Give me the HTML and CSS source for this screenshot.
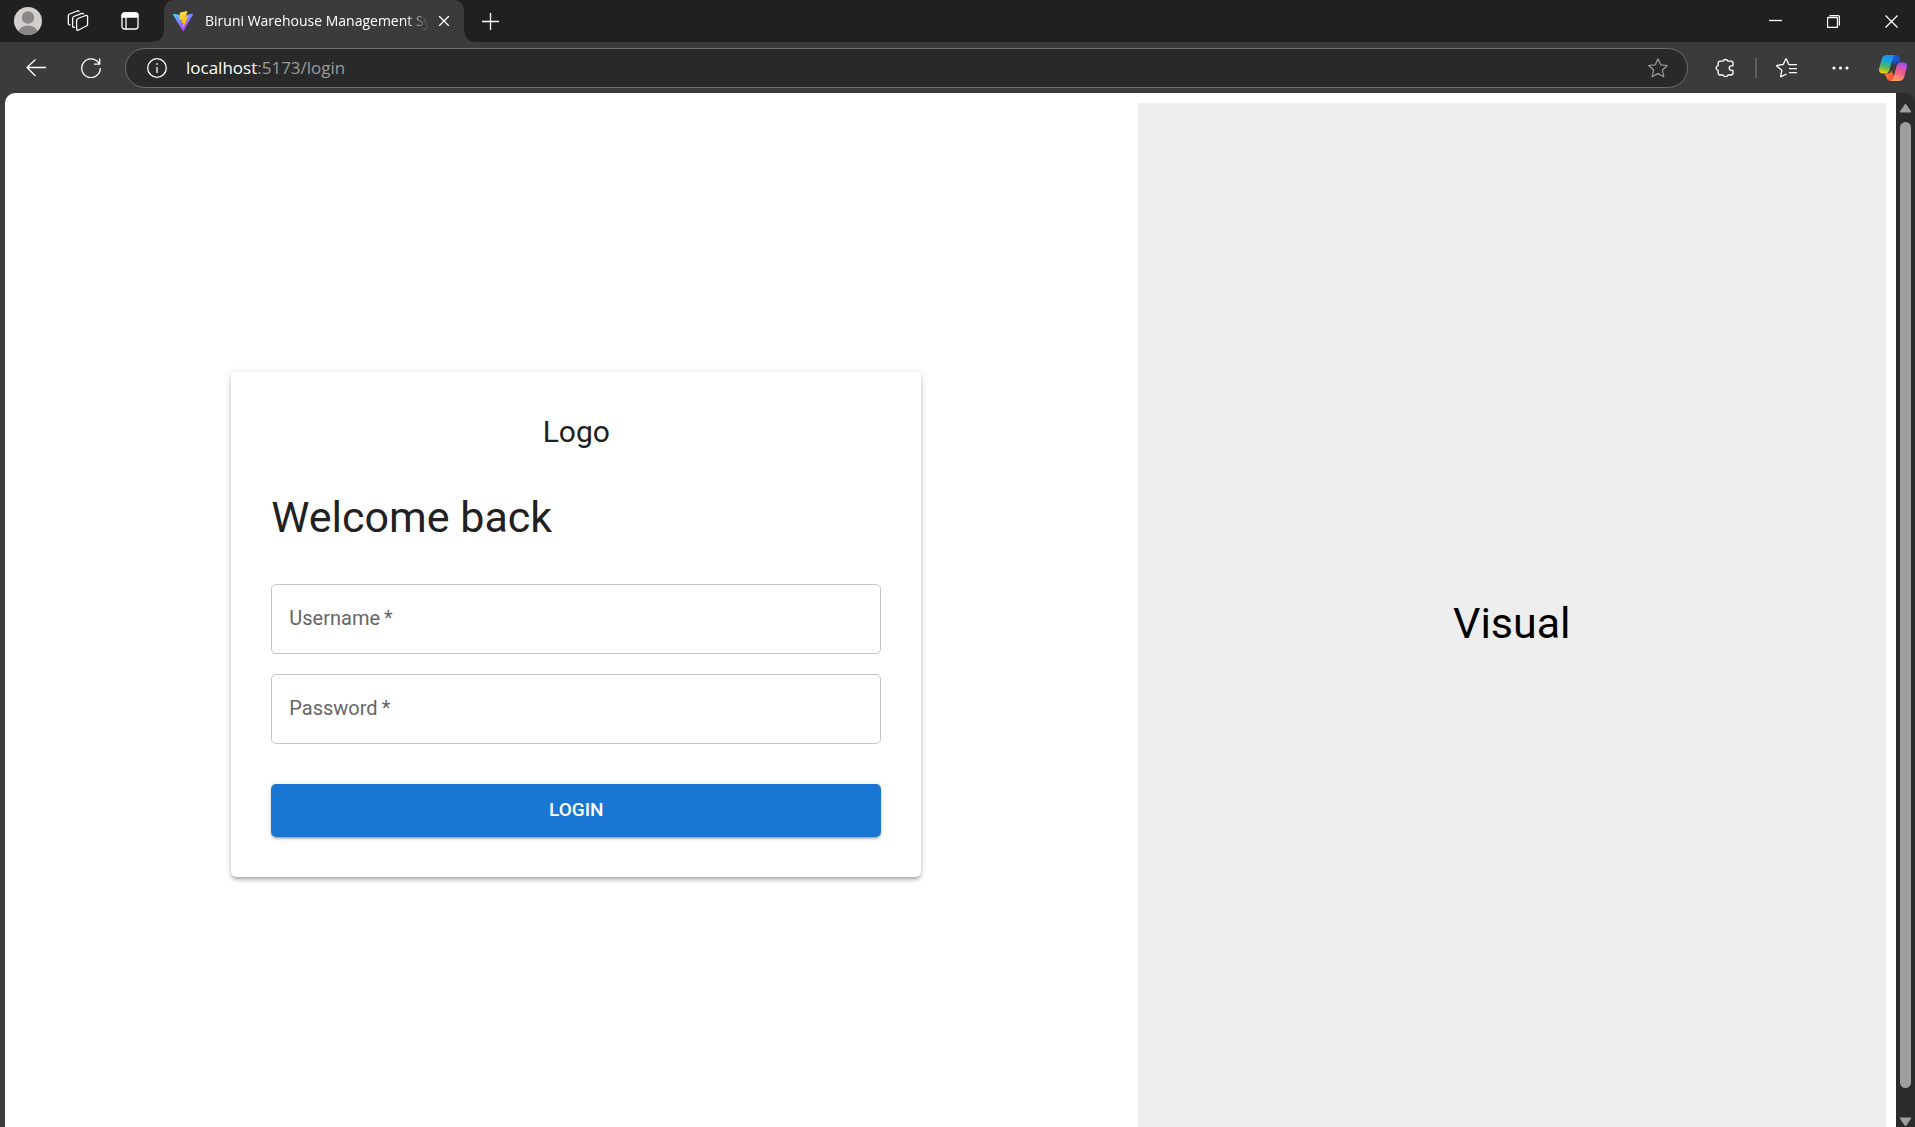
FILE: index.html
```html
<!DOCTYPE html>
<html lang="en">
<head>
  <meta charset="utf-8">
  <meta name="viewport" content="width=device-width, initial-scale=1">
  <title>Biruni Warehouse Management System</title>
  <link rel="stylesheet" href="styles.css">
</head>
<body>
  <div class="browser">
    <header class="tab-strip">
      <button class="strip-button" type="button" aria-label="Profile">
        <svg width="28" height="28" viewBox="0 0 28 28">
          <clipPath id="avatar-clip"><circle cx="14" cy="14" r="14"/></clipPath>
          <g clip-path="url(#avatar-clip)">
            <rect width="28" height="28" fill="#d2d0ce"/>
            <circle cx="14" cy="10.500" r="6.200" fill="#8b8785"/>
            <ellipse cx="14" cy="25" rx="9.500" ry="6.500" fill="#8b8785"/>
          </g>
        </svg>
      </button>
      <button class="strip-button" type="button" aria-label="Workspaces">
        <svg class="line-icon" width="24" height="22" viewBox="0 0 24 22">
          <path d="M9.600 10.600q0-1.500 1.400-2.100l7.600-3q2-.5 2 1.400v7.300q0 1.300-1.200 1.800l-7.800 4q-2 .8-2-1.200z"/>
          <path d="M7.800 17.200Q5.600 18 5.600 15.800V8.600q0-1.500 1.300-2.100l7.900-3.100q1.500-.4 2 .8"/>
          <path d="M3.500 14.800q-2.200.3-2.200-1.900V6.100q0-1.500 1.300-2.100L10.300 1q1.500-.4 2 .6"/>
        </svg>
      </button>
      <button class="strip-button" type="button" aria-label="Tab actions">
        <svg class="line-icon" width="18" height="18" viewBox="0 0 18 18">
          <rect x="1" y="1" width="16" height="16" rx="2.500"/>
          <path d="M1 5V3.500Q1 1 3.500 1h11Q17 1 17 3.500V5z" fill="#fff"/>
          <path d="M5 5v12"/>
        </svg>
      </button>
      <div class="tab">
        <svg width="20" height="20" viewBox="0 0 32 32">
          <defs>
            <linearGradient id="vite-body" x1="0" y1="0" x2=".6" y2="1"><stop offset="0" stop-color="#41d1ff"/><stop offset="1" stop-color="#bd34fe"/></linearGradient>
            <linearGradient id="vite-bolt" x1=".4" y1="0" x2=".6" y2="1"><stop offset="0" stop-color="#ffea83"/><stop offset=".1" stop-color="#ffdd35"/><stop offset="1" stop-color="#ffa800"/></linearGradient>
          </defs>
          <path d="M31.900 5.800 17 31.400q-1 1.200-1.800 0L.1 5.800Q-.3 4.300 1.300 4.300L16 6.900l14.700-2.600q1.500 0 1.200 1.500z" fill="url(#vite-body)"/>
          <path d="M22.400.1 11.800 2.200q-.5.1-.5.6l-.7 11q0 .6.600.6l3-.7q.7 0 .6.700l-.9 4.300q0 .7.700.6l1.800-.5q.7 0 .6.700l-1.400 6.700q.2 1 .9.200L24.300 9.200q.2-.8-.6-.8l-3 .6q-.7 0-.6-.7l3-7.400q0-.8-.7-.8z" fill="url(#vite-bolt)"/>
        </svg>
        <span class="tab-title">Biruni Warehouse Management System</span>
        <button class="tab-close" type="button" aria-label="Close tab">
          <svg class="line-icon" width="10" height="10" viewBox="0 0 10 10"><path d="M0 0 10 10M10 0 0 10"/></svg>
        </button>
      </div>
      <button class="strip-button new-tab" type="button" aria-label="New tab">
        <svg class="line-icon" width="17" height="17" viewBox="0 0 17 17"><path d="M8.500 0v17M0 8.500h17"/></svg>
      </button>
      <div class="window-controls">
        <button type="button" aria-label="Minimize">
          <svg class="line-icon" width="13" height="13" viewBox="0 0 13 13"><path d="M0 5.500h13"/></svg>
        </button>
        <button type="button" aria-label="Restore">
          <svg class="line-icon" width="13" height="13" viewBox="0 0 13 13"><rect x=".5" y="2.500" width="10" height="10" rx="1"/><path d="M2.500.5h8q2 0 2 2v8"/></svg>
        </button>
        <button type="button" aria-label="Close">
          <svg class="line-icon" width="13" height="13" viewBox="0 0 13 13"><path d="M.5.5l12 12M12.500.5l-12 12"/></svg>
        </button>
      </div>
    </header>

    <nav class="toolbar" aria-label="Browser toolbar">
      <button class="tool-button" type="button" aria-label="Back">
        <svg class="line-icon" width="20" height="20" viewBox="0 0 20 20"><path d="M20 9.500H1M9.500 1.500 1 9.500l8.500 8.500"/></svg>
      </button>
      <button class="tool-button" type="button" aria-label="Refresh">
        <svg class="line-icon" width="20" height="20" viewBox="0 0 20 20"><path d="M19.300 10A9.300 9.300 0 1 1 18 5.500M18.700.5v5.700h-5.700"/></svg>
      </button>
      <div class="address-bar">
        <svg class="line-icon" width="20" height="20" viewBox="0 0 20 20"><circle cx="10" cy="10" r="9.300"/><path d="M10 9v6"/><circle cx="10" cy="6" r=".6" fill="#fff" stroke-width=".6"/></svg>
        <div class="url" role="textbox" aria-label="Address" contenteditable="true" spellcheck="false"><span class="host">localhost</span>:5173/login</div>
        <button class="favorite" type="button" aria-label="Add to favorites">
          <svg width="20" height="20" viewBox="0 0 20 20" fill="none" stroke="#9a9a9a" stroke-width="1.200" stroke-linejoin="round"><path d="M10 .8l2.700 6 6.600.7-4.900 4.500 1.400 6.700L10 15.600l-5.800 3.100 1.400-6.700L.7 7.500l6.600-.7z"/></svg>
        </button>
      </div>
      <div class="tools">
        <button class="tool-button" type="button" aria-label="Extensions">
          <svg class="line-icon" width="20" height="20" viewBox="0 0 20 20"><path d="M5 3.200h3a2.700 2.700 0 0 1 5 0h3q2 0 2 2v2.600h-1.500a2.300 2.300 0 0 0 0 4.600H18V15q0 2-2 2h-3a2.700 2.700 0 0 1-5 0H5q-1.800 0-1.800-2v-2.500a2.500 2.500 0 0 1 0-4.900V5.200q0-2 1.800-2z"/></svg>
        </button>
        <span class="divider"></span>
        <button class="tool-button bookmarks" type="button" aria-label="Favorites">
          <svg class="line-icon" width="21" height="20" viewBox="0 0 21 20"><path d="M10.500 16l-5.300 2.700q-.7.200-.5-.6l1.200-5.900L.9 8.200q-.5-.7.400-.9l5.900-.8L9.600 1.200q.4-.7.900 0l2.300 5.200 1.700.4M14 6.700h7M13 10.700h8M13 14.700h8"/></svg>
        </button>
        <button class="tool-button" type="button" aria-label="Settings and more">
          <svg width="17" height="4" viewBox="0 0 17 4" fill="#fff"><circle cx="2" cy="2" r="1.600"/><circle cx="8.500" cy="2" r="1.600"/><circle cx="15" cy="2" r="1.600"/></svg>
        </button>
        <button class="copilot" type="button" aria-label="Copilot">
          <svg width="28" height="26" viewBox="0 0 28 26">
            <defs>
              <linearGradient id="cp-left" x1=".5" y1="0" x2=".3" y2="1"><stop offset="0" stop-color="#1593f0"/><stop offset=".35" stop-color="#1ba5d8"/><stop offset=".65" stop-color="#58b957"/><stop offset="1" stop-color="#f5cd05"/></linearGradient>
              <linearGradient id="cp-right" x1=".7" y1="0" x2=".3" y2="1"><stop offset="0" stop-color="#a34bf2"/><stop offset=".45" stop-color="#ee5790"/><stop offset="1" stop-color="#ffa45c"/></linearGradient>
              <linearGradient id="cp-top" x1="0" y1="0" x2="1" y2="1"><stop offset="0" stop-color="#1b62ec"/><stop offset="1" stop-color="#1641b8"/></linearGradient>
              <linearGradient id="cp-bottom" x1="0" y1="0" x2="1" y2="1"><stop offset="0" stop-color="#ff8a31"/><stop offset="1" stop-color="#f4403f"/></linearGradient>
            </defs>
            <path d="M11 0h6q2.700 0 3.500 3l1.200 4.500h-3.200q-2.500 0-3.500 3z" fill="url(#cp-top)"/>
            <path d="M5.500 18.500h4q2 0 3-3L17 26h-5.500q-3 0-3.800-3z" fill="url(#cp-bottom)"/>
            <path d="M8 0h8.500q-2 .3-2.800 3l-3.500 12.500q-1 3-4 3H4Q-.9 18.500.2 13.500L2.800 4Q4 0 8 0z" fill="url(#cp-left)"/>
            <path d="M20 26h-8.500q2-.7 2.800-3l3.500-12.500q1-3 4-3H24q4.900 0 3.800 5L25.200 22q-1.200 4-5.200 4z" fill="url(#cp-right)"/>
          </svg>
        </button>
      </div>
    </nav>

    <div class="viewport">
      <main class="page">
        <section class="login-side">
          <form class="card">
            <div class="logo">Logo</div>
            <h1>Welcome back</h1>
            <div class="fields">
              <div class="field">
                <input id="username" type="text" required>
                <label for="username">Username&thinsp;*</label>
              </div>
              <div class="field">
                <input id="password" type="password" required>
                <label for="password">Password&thinsp;*</label>
              </div>
            </div>
            <button class="login-button" type="submit">LOGIN</button>
          </form>
        </section>
        <aside class="visual">Visual</aside>
      </main>
      <div class="scrollbar" aria-hidden="true">
        <svg width="13" height="10" viewBox="0 0 13 10"><path d="M6.500 1 12 9H1z" fill="#9f9f9f" stroke="#9f9f9f" stroke-linejoin="round"/></svg>
        <div class="thumb"></div>
        <svg width="13" height="10" viewBox="0 0 13 10"><path d="M6.500 9 12 1H1z" fill="#9f9f9f" stroke="#9f9f9f" stroke-linejoin="round"/></svg>
      </div>
    </div>
  </div>
</body>
</html>
```

FILE: styles.css
```css
* {
  box-sizing: border-box;
}

body {
  margin: 0;
  font-family: Roboto, sans-serif;
}

button {
  display: flex;
  align-items: center;
  justify-content: center;
  margin: 0;
  padding: 0;
  border: 0;
  background: none;
}

svg {
  flex: none;
}

.line-icon {
  fill: none;
  stroke: #fff;
  stroke-width: 1.3;
  stroke-linejoin: round;
}

.browser {
  display: flex;
  flex-direction: column;
  height: 100vh;
  overflow: hidden;
  background: #3b3b3b;
}

/* Tab strip */
.tab-strip {
  display: flex;
  flex: none;
  height: 42px;
  padding-left: 2px;
  background: #202020;
}

.strip-button {
  width: 51px;
}

.new-tab {
  width: 53px;
}

.tab {
  position: relative;
  display: flex;
  align-items: center;
  width: 300px;
  margin-left: 9px;
  padding: 0 9px;
  border-radius: 10px 10px 0 0;
  background: #3b3b3b;
}

.tab::before,
.tab::after {
  content: "";
  position: absolute;
  bottom: 0;
  width: 10px;
  height: 10px;
}

.tab::before {
  right: 100%;
  background: radial-gradient(circle at 0 0, #202020 9px, #3b3b3b 10px);
}

.tab::after {
  left: 100%;
  background: radial-gradient(circle at 100% 0, #202020 9px, #3b3b3b 10px);
}

.tab-title {
  flex: 1;
  margin: 0 4px 0 12px;
  overflow: hidden;
  color: #fff;
  font: 14px/20px "Open Sans", sans-serif;
  white-space: nowrap;
  mask-image: linear-gradient(to left, transparent, #000 24px);
}

.tab-close {
  width: 22px;
  height: 22px;
}

.window-controls {
  display: flex;
  gap: 10px;
  margin-left: auto;
}

.window-controls button {
  width: 48px;
}

/* Toolbar */
.toolbar {
  display: flex;
  flex: none;
  align-items: center;
  height: 51px;
  padding-left: 8px;
}

.tool-button {
  width: 55px;
  height: 40px;
}

.address-bar {
  display: flex;
  flex: 1;
  align-items: center;
  gap: 19px;
  height: 40px;
  margin: 0 9px 0 7px;
  padding: 0 19px 0 21px;
  border: 1px solid #6c6c6c;
  border-radius: 20px;
  background: #292929;
}

.url {
  flex: 1;
  color: #9a9a9a;
  font: 17px/24px "Open Sans", sans-serif;
}

.host {
  color: #fff;
}

.tools {
  display: flex;
  align-items: center;
}

.divider {
  width: 2px;
  height: 20px;
  margin: 0 2px 0 3px;
  background: #5e5e5e;
}

.bookmarks {
  width: 54px;
}

.copilot {
  justify-content: flex-end;
  width: 47px;
  height: 40px;
  padding-right: 8px;
}

/* Web page */
.viewport {
  display: flex;
  flex: 1;
  min-height: 0;
  padding-left: 5px;
}

.page {
  display: grid;
  flex: 1;
  grid-template-columns: 3fr 2fr;
  grid-template-rows: calc(100vh - 85px);
  padding: 10px;
  overflow: hidden;
  border-top-left-radius: 10px;
  background: #fff;
}

.login-side {
  display: flex;
  align-items: center;
  justify-content: center;
}

.card {
  display: flex;
  flex-direction: column;
  gap: 40px;
  width: 100%;
  max-width: 690px;
  padding: 40px;
  border-radius: 5px;
  color: #212121;
  box-shadow: 0 4px 5px -2px rgba(0, 0, 0, .2), 0 2px 3px rgba(0, 0, 0, .14), 0 1px 10px rgba(0, 0, 0, .12);
}

.logo {
  font-size: 30px;
  line-height: 40px;
  text-align: center;
}

h1 {
  margin: 0;
  padding-bottom: 2px;
  font-size: 43px;
  font-weight: 400;
  line-height: 50px;
}

.fields {
  display: grid;
  gap: 20px;
}

.field {
  position: relative;
}

.field input {
  display: block;
  width: 100%;
  height: 70px;
  padding: 0 18px;
  border: 1px solid #c4c4c4;
  border-radius: 5px;
  background: none;
  font: 20px Roboto, sans-serif;
}

.field label {
  position: absolute;
  inset: 0;
  display: flex;
  align-items: center;
  padding: 0 18px 2px;
  color: #666;
  font-size: 20px;
  pointer-events: none;
}

.login-button {
  height: 53px;
  padding-bottom: 2px;
  border-radius: 5px;
  background: #1976d2;
  color: #fff;
  font: 500 19px Roboto, sans-serif;
  box-shadow: 0 4px 2px -3px rgba(0, 0, 0, .2), 0 2px 2px rgba(0, 0, 0, .14), 0 1px 6px rgba(0, 0, 0, .12);
}

.visual {
  display: flex;
  align-items: center;
  justify-content: center;
  padding-bottom: 2px;
  background: #eee;
  color: #000;
  font-size: 43px;
}

.scrollbar {
  display: flex;
  flex-direction: column;
  align-items: center;
  gap: 9px;
  width: 19px;
  padding-top: 10px;
  border-top-right-radius: 10px;
  background: #2b2b2b;
}

.thumb {
  flex: 1;
  width: 11px;
  margin-bottom: 20px;
  border-radius: 6px;
  background: #9f9f9f;
}
```
